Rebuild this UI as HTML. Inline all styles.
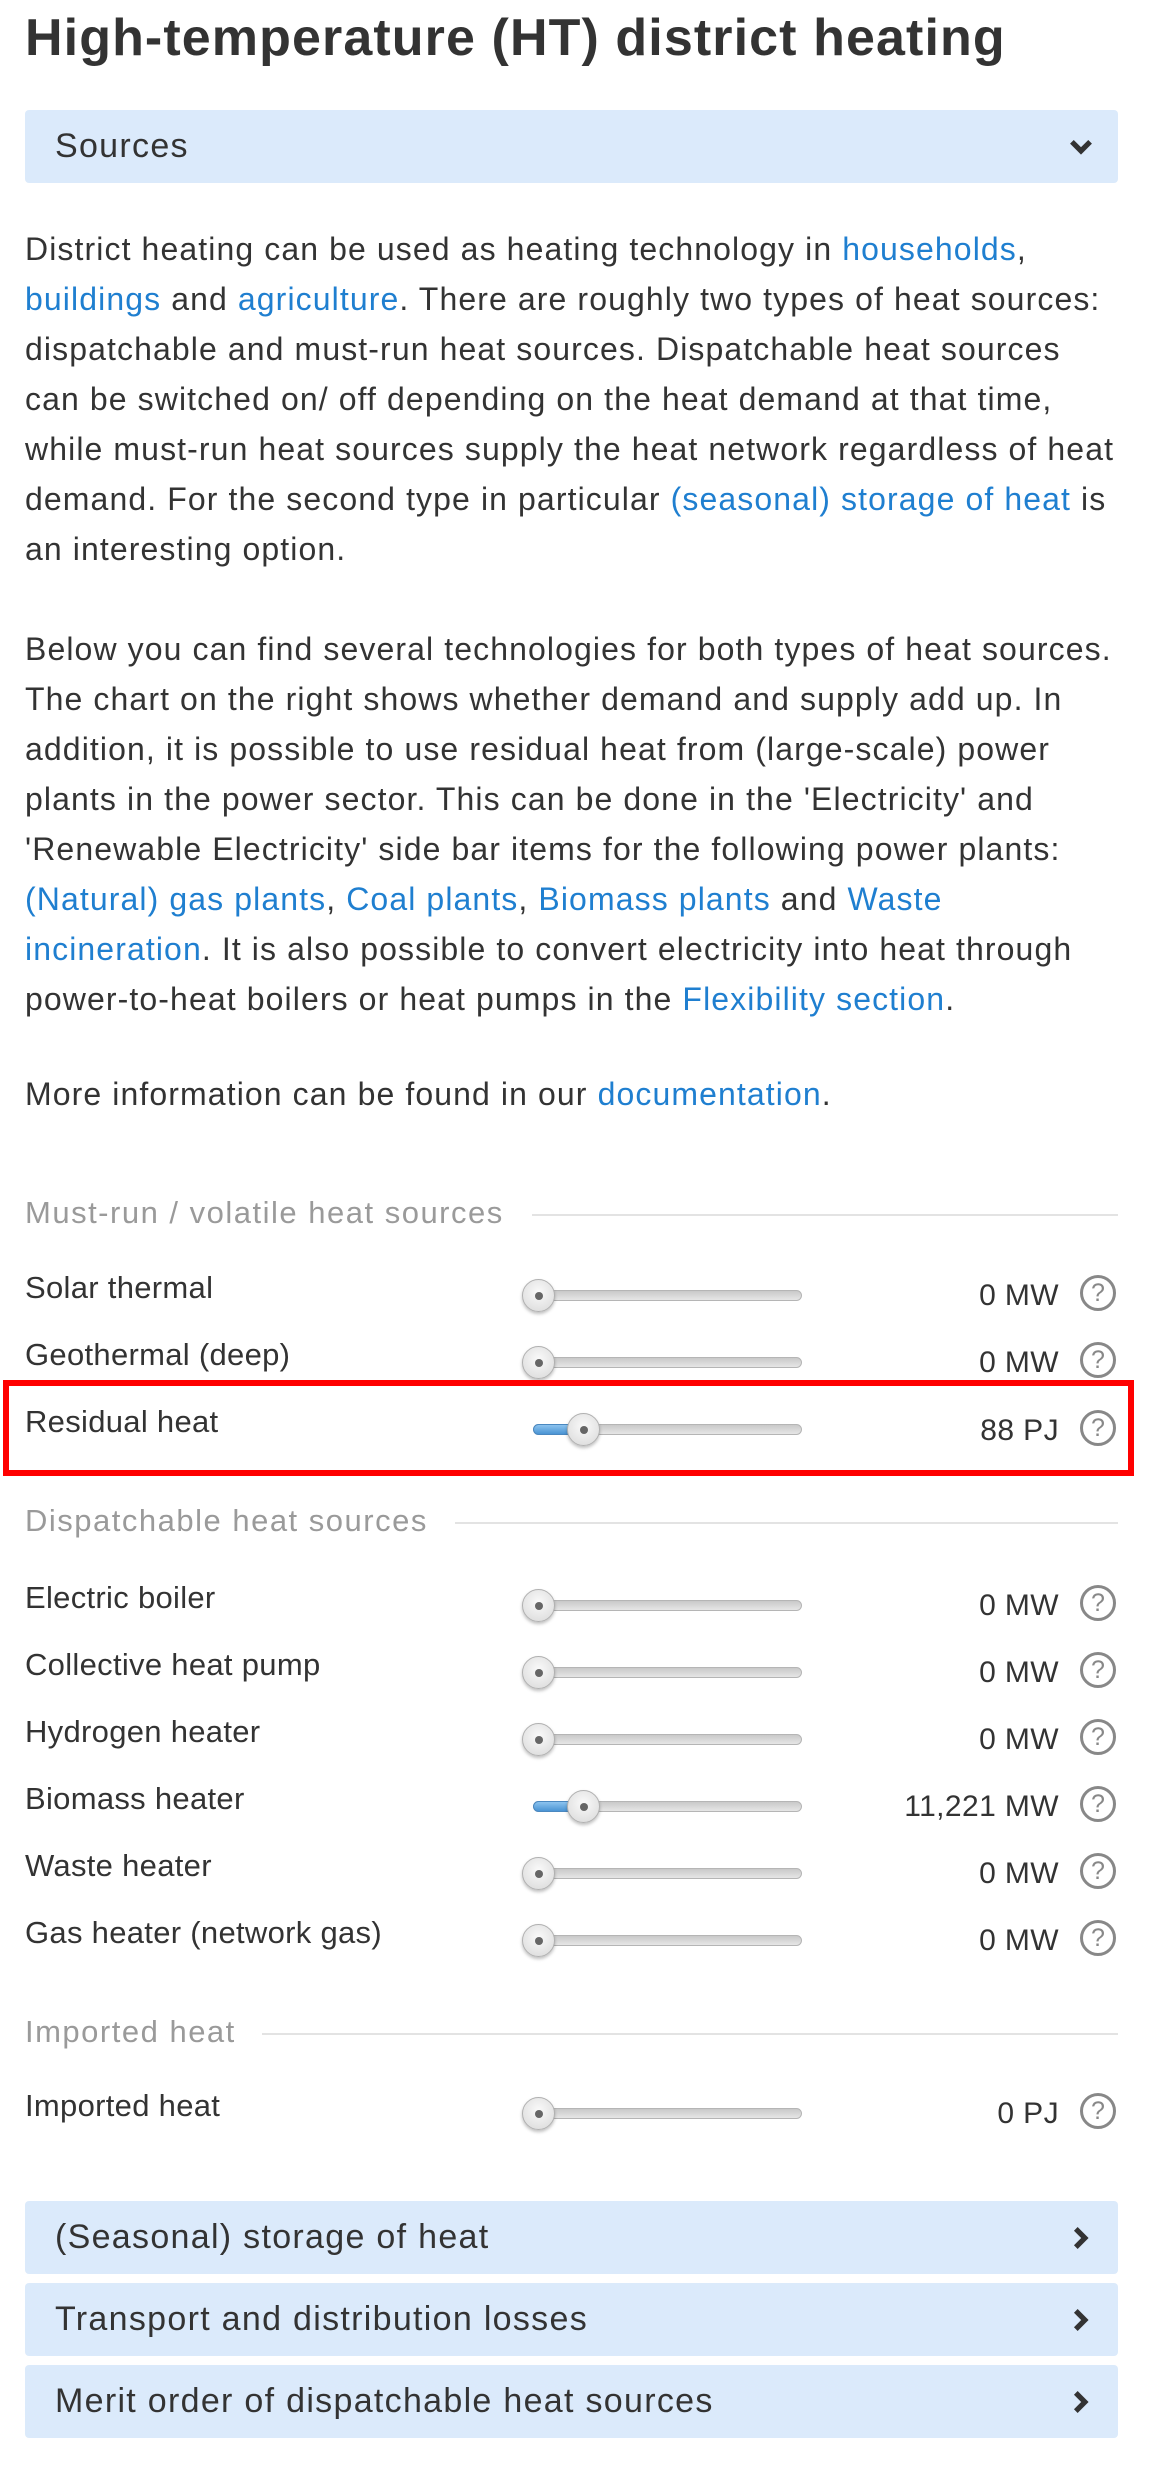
<!DOCTYPE html>
<html><head><meta charset="utf-8"><style>
*{margin:0;padding:0;box-sizing:border-box}
body{width:1164px;height:2475px;background:#fff;position:relative;font-family:"Liberation Sans",Helvetica,Arial,sans-serif;color:#333;overflow:hidden}
.a{position:absolute}
h1{position:absolute;left:25px;top:8px;font-size:52px;font-weight:bold;color:#333;letter-spacing:1.1px;white-space:nowrap}
.bar{position:absolute;left:25px;width:1093px;height:73px;background:#dbeafb;border-radius:4px;font-size:34px;letter-spacing:1.3px;line-height:73px;padding-left:30px;color:#333;white-space:nowrap}
.bar svg{position:absolute;right:24px;top:24px}
.p{position:absolute;left:25px;width:1130px;font-size:32px;letter-spacing:1.1px;line-height:50px;color:#333;white-space:nowrap}
.p a{color:#1f7fd0;text-decoration:none}
.sh{position:absolute;left:25px;font-size:31px;letter-spacing:1.5px;color:#9a9a9a;line-height:40px;white-space:nowrap}
.ln{position:absolute;height:2px;background:#e3e3e3;right:46px}
.lab{position:absolute;left:25px;font-size:31px;letter-spacing:0.3px;line-height:40px;color:#333;white-space:nowrap}
.trk{position:absolute;left:530px;width:272px;height:11px;border-radius:6px;background:linear-gradient(#c9c9c9,#e6e6e6);border:1px solid #b5b5b5}
.fill{position:absolute;height:11px;border-radius:6px 0 0 6px;background:linear-gradient(#8cc3ee,#4a94d4);border:1px solid #4a88c0}
.th{position:absolute;width:33px;height:33px;border-radius:50%;background:radial-gradient(circle at 50% 40%,#fafafa,#d8d8d8);border:1px solid #b0b0b0;box-shadow:0 2px 3px rgba(0,0,0,.25)}
.th:after{content:"";position:absolute;left:12px;top:12px;width:8px;height:8px;border-radius:50%;background:#666}
.val{position:absolute;right:105px;font-size:30px;letter-spacing:0.4px;line-height:40px;color:#333;white-space:nowrap}
.q{position:absolute;left:1080px;width:36px;height:36px;border-radius:50%;border:3px solid #888;color:#888;font-size:25px;line-height:30px;text-align:center}
</style></head><body>
<h1>High-temperature (HT) district heating</h1>
<div class="bar" style="top:110px">Sources<svg width="26" height="26" viewBox="0 0 20 20"><path d="M3 6 L10 13 L17 6" stroke="#333" stroke-width="4" fill="none"/></svg></div>

<div class="p" style="top:224px">District heating can be used as heating technology in <a>households</a>,<br><a>buildings</a> and <a>agriculture</a>. There are roughly two types of heat sources:<br>dispatchable and must-run heat sources. Dispatchable heat sources<br>can be switched on/ off depending on the heat demand at that time,<br>while must-run heat sources supply the heat network regardless of heat<br>demand. For the second type in particular <a>(seasonal) storage of heat</a> is<br>an interesting option.</div>

<div class="p" style="top:624px">Below you can find several technologies for both types of heat sources.<br>The chart on the right shows whether demand and supply add up. In<br>addition, it is possible to use residual heat from (large-scale) power<br>plants in the power sector. This can be done in the 'Electricity' and<br>'Renewable Electricity' side bar items for the following power plants:<br><a>(Natural) gas plants</a>, <a>Coal plants</a>, <a>Biomass plants</a> and <a>Waste</a><br><a>incineration</a>. It is also possible to convert electricity into heat through<br>power-to-heat boilers or heat pumps in the <a>Flexibility section</a>.</div>

<div class="p" style="top:1069px">More information can be found in our <a>documentation</a>.</div>

<div class="sh" style="top:1193px">Must-run / volatile heat sources</div><div class="ln" style="left:532px;top:1214px"></div>

<div class="lab" style="top:1268px">Solar thermal</div><div class="trk" style="top:1290px"></div><div class="th" style="left:522px;top:1279px"></div><div class="val" style="top:1276px">0 MW</div><div class="q" style="top:1275px">?</div>
<div class="lab" style="top:1335px">Geothermal (deep)</div><div class="trk" style="top:1357px"></div><div class="th" style="left:522px;top:1346px"></div><div class="val" style="top:1343px">0 MW</div><div class="q" style="top:1342px">?</div>
<div class="lab" style="top:1402px">Residual heat</div><div class="trk" style="top:1424px;left:533px;width:269px"></div><div class="fill" style="left:533px;top:1424px;width:40px"></div><div class="th" style="left:567px;top:1413px"></div><div class="val" style="top:1411px">88 PJ</div><div class="q" style="top:1410px">?</div>
<div class="a" style="left:3px;top:1380px;width:1131px;height:96px;border:6px solid #f00"></div>

<div class="sh" style="top:1501px">Dispatchable heat sources</div><div class="ln" style="left:455px;top:1522px"></div>

<div class="lab" style="top:1578px">Electric boiler</div><div class="trk" style="top:1600px"></div><div class="th" style="left:522px;top:1589px"></div><div class="val" style="top:1586px">0 MW</div><div class="q" style="top:1585px">?</div>
<div class="lab" style="top:1645px">Collective heat pump</div><div class="trk" style="top:1667px"></div><div class="th" style="left:522px;top:1656px"></div><div class="val" style="top:1653px">0 MW</div><div class="q" style="top:1652px">?</div>
<div class="lab" style="top:1712px">Hydrogen heater</div><div class="trk" style="top:1734px"></div><div class="th" style="left:522px;top:1723px"></div><div class="val" style="top:1720px">0 MW</div><div class="q" style="top:1719px">?</div>
<div class="lab" style="top:1779px">Biomass heater</div><div class="trk" style="top:1801px;left:533px;width:269px"></div><div class="fill" style="left:533px;top:1801px;width:40px"></div><div class="th" style="left:567px;top:1790px"></div><div class="val" style="top:1787px">11,221 MW</div><div class="q" style="top:1786px">?</div>
<div class="lab" style="top:1846px">Waste heater</div><div class="trk" style="top:1868px"></div><div class="th" style="left:522px;top:1857px"></div><div class="val" style="top:1854px">0 MW</div><div class="q" style="top:1853px">?</div>
<div class="lab" style="top:1913px">Gas heater (network gas)</div><div class="trk" style="top:1935px"></div><div class="th" style="left:522px;top:1924px"></div><div class="val" style="top:1921px">0 MW</div><div class="q" style="top:1920px">?</div>

<div class="sh" style="top:2012px">Imported heat</div><div class="ln" style="left:262px;top:2033px"></div>
<div class="lab" style="top:2086px">Imported heat</div><div class="trk" style="top:2108px"></div><div class="th" style="left:522px;top:2097px"></div><div class="val" style="top:2094px">0 PJ</div><div class="q" style="top:2093px">?</div>

<div class="bar" style="top:2201px">(Seasonal) storage of heat<svg width="26" height="26" viewBox="0 0 20 20"><path d="M6 3 L13 10 L6 17" stroke="#333" stroke-width="4" fill="none"/></svg></div>
<div class="bar" style="top:2283px">Transport and distribution losses<svg width="26" height="26" viewBox="0 0 20 20"><path d="M6 3 L13 10 L6 17" stroke="#333" stroke-width="4" fill="none"/></svg></div>
<div class="bar" style="top:2365px">Merit order of dispatchable heat sources<svg width="26" height="26" viewBox="0 0 20 20"><path d="M6 3 L13 10 L6 17" stroke="#333" stroke-width="4" fill="none"/></svg></div>
</body></html>
